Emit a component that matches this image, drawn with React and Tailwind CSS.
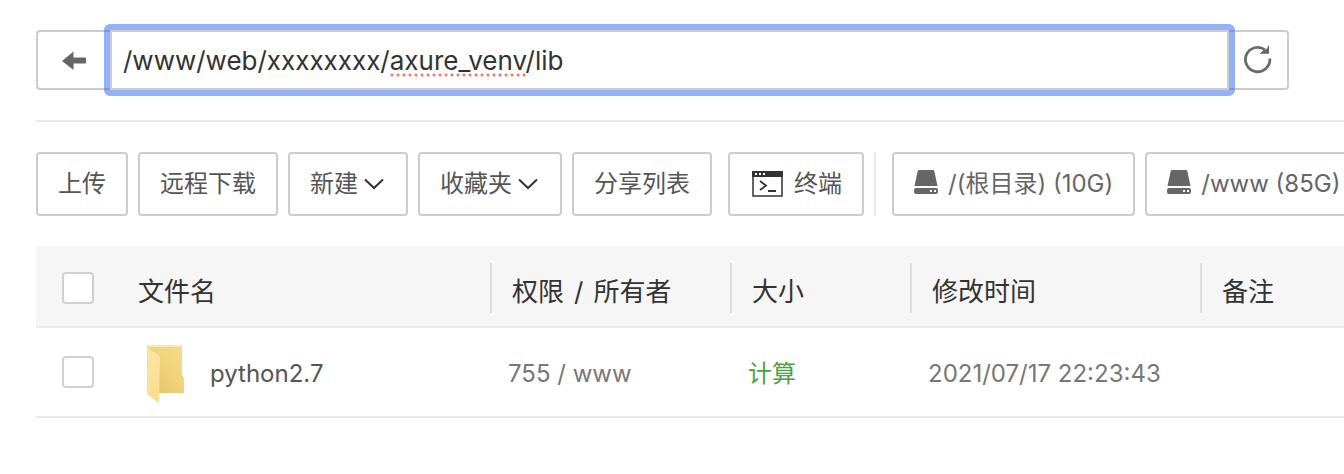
import React, { useState } from 'react';

const fileList = [
  { name: 'python2.7', auth: '755 / www', mtime: '2021/07/17 22:23:43', note: '' },
];

const diskList = [
  { path: '/(根目录)', size: '10G' },
  { path: '/www', size: '85G' },
];

const BackIcon = () => (
  <svg width="24" height="20" viewBox="0 0 24 20" fill="#666" aria-hidden="true">
    <path d="M0 11 L11.5 1.5 V7.500 H23 Q24 7.500 24 8.500 V12.500 Q24 13.500 23 13.500 H11.500 V20 Z" />
  </svg>
);

const RefreshIcon = () => (
  <svg width="30" height="30" viewBox="0 0 30 30" fill="none" aria-hidden="true">
    <path d="M26.800 13.500 A12.200 12.200 0 1 1 22 4.800" stroke="#6b6b6b" strokeWidth="2.800" />
    <path d="M26 0 V8.800 H16.500 L19.500 6 L23.500 4 Z" fill="#666" />
  </svg>
);

const ArrowDown = () => (
  <svg className="mr-0.5" width="20" height="12" viewBox="0 0 20 12" fill="none" stroke="#333" strokeWidth="2" aria-hidden="true">
    <path d="M1 1.500 L10 10 L19 1.500" />
  </svg>
);

const TerminalIcon = () => (
  <svg className="ml-0.5" width="32" height="26" viewBox="0 0 32 26" aria-hidden="true">
    <path d="M1 1 H30 V25 H1 Z" fill="#fff" stroke="#333" strokeWidth="1.500" />
    <path d="M0 0 H31 V6 H0 Z" fill="#333" />
    <path d="M3 2 h2 v2 h-2 Z M7 2 h2 v2 h-2 Z M11 2 h2 v2 h-2 Z" fill="#fff" />
    <path d="M8 10 L14 14.500 L8 19 M16 20 H24" fill="none" stroke="#333" strokeWidth="1.800" />
  </svg>
);

const DiskIcon = () => (
  <svg className="mb-1" width="24" height="24" viewBox="0 0 24 24" fill="#666" aria-hidden="true">
    <path d="M5 0 H19 Q20 0 20.300 1 L23.500 16 H0.500 L3.700 1 Q4 0 5 0 Z" />
    <path fillRule="evenodd" d="M2 18 H22 Q24 18 24 20 V22 Q24 24 22 24 H2 Q0 24 0 22 V20 Q0 18 2 18 Z M16 20 V22 H18 V20 Z M20 20 V22 H22 V20 Z" />
  </svg>
);

const FolderIcon = () => (
  <svg width="40" height="58" viewBox="0 0 40 58" aria-hidden="true">
    <defs>
      <linearGradient id="folderBack" x1="0" y1="1" x2="1" y2="0">
        <stop offset="0" stopColor="#e3bf62" />
        <stop offset="0.600" stopColor="#f1d57e" />
        <stop offset="1" stopColor="#f5dc88" />
      </linearGradient>
      <linearGradient id="folderFront" x1="0" y1="0" x2="0" y2="1">
        <stop offset="0" stopColor="#fbe5a4" />
        <stop offset="1" stopColor="#f9de90" />
      </linearGradient>
    </defs>
    <path d="M1 1 H36 V30 L38 33 V48 H12 L1 44 Z" fill="url(#folderBack)" />
    <path d="M1 0 H36 V2 H1 Z" fill="#f9e6b0" />
    <path d="M1 2 L11 9 Q14 11 14 13 L13 58 L2 50 Q1 49 1 47 Z" fill="url(#folderFront)" />
  </svg>
);

const ToolButton = ({ children, className = '' }) => (
  <button
    type="button"
    className={`flex h-16 shrink-0 items-center justify-center whitespace-nowrap rounded border-2 border-[#ccc] bg-white px-5 text-2xl text-[#555] ${className}`}
  >
    {children}
  </button>
);

const Checkbox = ({ label }) => (
  <input
    type="checkbox"
    aria-label={label}
    className="block size-8 appearance-none rounded border-2 border-[#d0d0d0] bg-white checked:bg-[#20a53a]"
  />
);

const PathBar = () => {
  const [path, setPath] = useState('/www/web/xxxxxxxx/axure_venv/lib');

  return (
    <div className="mr-[55px] flex h-15">
      <button type="button" aria-label="返回上一级" className="flex w-[74px] shrink-0 items-center justify-center rounded-l border-2 border-r-0 border-[#ccc] bg-white">
        <BackIcon />
      </button>
      <div className="relative flex-1">
        <input
          type="text"
          aria-label="路径"
          value={path}
          spellCheck={false}
          onChange={(e) => setPath(e.target.value)}
          className="block h-full w-full border-2 border-[#ccc] bg-white px-[11px] text-[26px] text-[#333] outline-none"
        />
        {/* focus ring */}
        <span className="pointer-events-none absolute -inset-1.5 rounded-md border-6 border-[#2866ee]/50" />
        {/* spelling mark under the unknown word */}
        <span className="pointer-events-none absolute bottom-[13px] left-[279px] h-1 w-[138px] bg-[radial-gradient(circle,#ee7b70_1px,transparent_2px)] bg-size-[6px_4px]" />
      </div>
      <button type="button" aria-label="刷新" className="flex w-15 shrink-0 items-center justify-center rounded-r border-2 border-l-0 border-[#ccc] bg-white">
        <RefreshIcon />
      </button>
    </div>
  );
};

const HeadCell = ({ children, className = '' }) => (
  <th className={`h-[81px] p-0 pt-1 text-left font-normal ${className}`}>
    <div className="flex h-[50px] items-center border-l-2 border-[#ddd] pt-1.5 pl-5">{children}</div>
  </th>
);

const FileTable = () => (
  <table className="mt-[30px] w-full table-fixed border-collapse">
    <thead>
      <tr className="border-b-2 border-[#ebebeb] bg-[#f6f6f6] text-[26px] text-[#333]">
        <th className="w-[102px] p-0 pt-1 pl-[26px]"><Checkbox label="全选" /></th>
        <th className="w-[352px] p-0 pt-2.5 text-left font-normal">文件名</th>
        <HeadCell className="w-[240px]">权限<span className="mx-2.5">/</span>所有者</HeadCell>
        <HeadCell className="w-[180px]">大小</HeadCell>
        <HeadCell className="w-[290px]">修改时间</HeadCell>
        <HeadCell>备注</HeadCell>
      </tr>
    </thead>
    <tbody>
      {fileList.map((file) => (
        <tr key={file.name} className="h-[90px] border-b-2 border-[#ebebeb] text-2xl text-[#777]">
          <td className="p-0 pl-[26px]"><Checkbox label={file.name} /></td>
          <td className="p-0 pt-1">
            <a href="#" className="flex items-center gap-6 pl-2 text-[#555]">
              <FolderIcon />
              {file.name}
            </a>
          </td>
          <td className="p-0 pt-1 pl-[18px]">{file.auth}</td>
          <td className="p-0 pt-1 pl-[18px]"><a href="#" className="text-[#4aa342]">计算</a></td>
          <td className="p-0 pt-1 pl-[18px]">{file.mtime}</td>
          <td className="p-0 pt-1 pl-[18px]">{file.note}</td>
        </tr>
      ))}
    </tbody>
  </table>
);

export default function App() {
  return (
    <main className="overflow-hidden bg-white pt-[30px] pl-9 font-[Inter,'Noto_Sans_CJK_SC',sans-serif]">
      <PathBar />
      <div className="mt-[30px] flex gap-2.5 border-t-2 border-[#ebebeb] pt-[30px]">
        <ToolButton>上传</ToolButton>
        <ToolButton>远程下载</ToolButton>
        <ToolButton className="gap-1.5">新建<ArrowDown /></ToolButton>
        <ToolButton className="gap-1.5">收藏夹<ArrowDown /></ToolButton>
        <ToolButton>分享列表</ToolButton>
        <ToolButton className="ml-1.5 gap-2.5"><TerminalIcon />终端</ToolButton>
        <div className="mr-1.5 w-0.5 shrink-0 bg-[#ebebeb]" />
        {diskList.map((disk) => (
          <ToolButton key={disk.path} className="gap-2.5 text-[#666]">
            <DiskIcon />
            {disk.path} ({disk.size})
          </ToolButton>
        ))}
      </div>
      <FileTable />
    </main>
  );
}
